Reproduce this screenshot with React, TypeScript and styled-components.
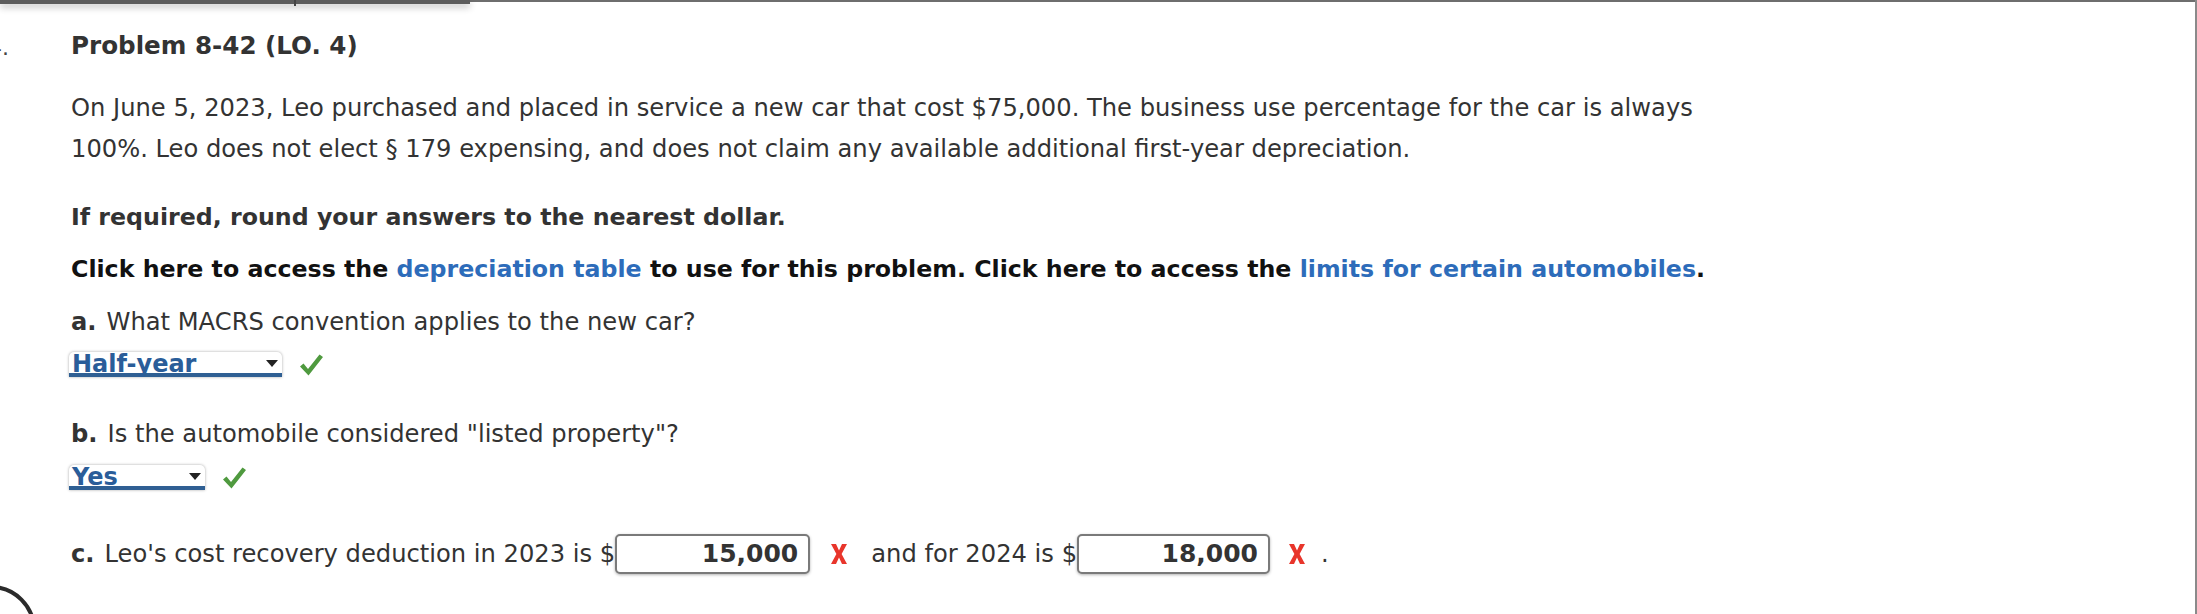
import React from "react";
import styled, { createGlobalStyle } from "styled-components";

const GlobalStyle = createGlobalStyle`
  html, body { margin: 0; padding: 0; background: #ffffff; }
  body { font-family: "DejaVu Sans", Verdana, sans-serif; color: #333333; }
`;

const Page = styled.div`
  position: relative;
  width: 2197px;
  height: 614px;
  box-sizing: border-box;
  border-right: 2px solid #8a8a8a;
  overflow: hidden;
  background: #ffffff;
`;

const TopBar = styled.div`
  display: flex;
  align-items: flex-start;
  height: 4px;
`;

const TopBarTab = styled.div`
  position: relative;
  width: 470px;
  height: 4px;
  background: #5c5c5c;
  box-shadow: 0 3px 7px rgba(0, 0, 0, 0.3);
  &::after {
    content: "";
    position: absolute;
    left: 294px;
    top: 0;
    width: 2px;
    height: 6px;
    background: #444;
  }
`;

const TopBarLine = styled.div`
  flex: 1;
  height: 2px;
  background: #6e6e6e;
`;

const Content = styled.div`
  display: grid;
  grid-template-columns: 71px 1fr;
  padding-top: 27px;
`;

const Gutter = styled.div`
  display: flex;
  justify-content: flex-start;
`;

const QNum = styled.div`
  width: 9px;
  overflow: hidden;
  display: flex;
  justify-content: flex-end;
  white-space: nowrap;
  font-size: 22px;
  line-height: 30px;
  margin-top: 2px;
  color: #444;
`;

const Main = styled.div`
  display: flex;
  flex-direction: column;
  min-width: 0;
`;

const Heading = styled.h2`
  margin: 0;
  font-size: 24.6px;
  line-height: 30px;
  font-weight: bold;
  color: #333333;
`;

const Para = styled.p<{ $gap: number }>`
  margin: ${(p) => p.$gap}px 0 0 0;
  font-size: 24.2px;
  line-height: 40.5px;
  color: #333333;
`;

const Line = styled.div<{ $gap: number; $dark?: boolean; $bold?: boolean }>`
  margin-top: ${(p) => p.$gap}px;
  font-size: ${(p) => (p.$bold ? "23.7px" : "24.2px")};
  line-height: 32px;
  font-weight: ${(p) => (p.$bold ? "bold" : "normal")};
  color: ${(p) => (p.$dark ? "#111111" : "#333333")};
  white-space: nowrap;
`;

const Link = styled.a`
  color: #2d6cba;
  font-weight: bold;
  text-decoration: none;
  cursor: pointer;
`;

const Label = styled.b`
  font-weight: bold;
  margin-right: 10px;
`;

const AnswerRow = styled.div<{ $gap: number }>`
  margin-top: ${(p) => p.$gap}px;
  display: flex;
  align-items: center;
  gap: 16px;
  margin-left: -2px;
`;

const SelectBox = styled.div<{ $width: number }>`
  position: relative;
  flex-shrink: 0;
  width: ${(p) => p.$width}px;
  height: 25px;
  box-sizing: border-box;
  background: #ffffff;
  border-radius: 5px 5px 0 0;
  box-shadow: 0 0 3px rgba(0, 0, 0, 0.35);
  border-bottom: 4px solid #2f5f93;
  display: flex;
  align-items: center;
  justify-content: space-between;
  padding: 0 4px 0 3px;
`;

const SelectValue = styled.span`
  font-size: 24px;
  font-weight: bold;
  line-height: 24px;
  color: #2a5d99;
  margin-top: 2px;
`;

const Caret = styled.span`
  width: 0;
  height: 0;
  border-left: 6px solid transparent;
  border-right: 6px solid transparent;
  border-top: 7px solid #222;
  margin-top: 2px;
`;

const FillRow = styled.div`
  margin-top: 44px;
  display: flex;
  align-items: center;
  font-size: 24.2px;
  line-height: 32px;
  color: #333333;
  white-space: nowrap;
`;

const NumberInput = styled.div<{ $width: number }>`
  flex-shrink: 0;
  width: ${(p) => p.$width}px;
  height: 40px;
  box-sizing: border-box;
  border: 2px solid #7a7a7a;
  border-radius: 5px;
  box-shadow: 0 1px 3px rgba(0, 0, 0, 0.3);
  background: #fff;
  display: flex;
  align-items: center;
  justify-content: flex-end;
  padding-right: 10px;
  font-size: 25px;
  font-weight: bold;
  color: #333;
`;

const Mark = styled.span<{ $ml: number; $mr: number }>`
  display: inline-flex;
  flex-shrink: 0;
  margin-left: ${(p) => p.$ml}px;
  margin-right: ${(p) => p.$mr}px;
`;

const Circle = styled.div`
  position: absolute;
  left: -54px;
  top: 585px;
  width: 90px;
  height: 90px;
  border-radius: 50%;
  border: 4px solid #2b2b2b;
  box-sizing: border-box;
`;

const Check = () => (
  <svg width="26" height="24" viewBox="0 0 26 24">
    <path
      d="M2 13.5 L5.5 10.5 L10 16 L21.5 1.5 L25 4 L10.5 22.5 Z"
      fill="#4f9a3f"
    />
  </svg>
);

const Cross = () => (
  <svg width="18" height="22" viewBox="0 0 18 22">
    <path
      d="M1 1 H6 L9 7.5 L12 1 H17 L11.6 11 L17 21 H12 L9 14.5 L6 21 H1 L6.4 11 Z"
      fill="#e8352b"
    />
  </svg>
);

export default function App() {
  return (
    <>
      <GlobalStyle />
      <Page>
        <TopBar>
          <TopBarTab />
          <TopBarLine />
        </TopBar>
        <Content>
          <Gutter>
            <QNum>4.</QNum>
          </Gutter>
          <Main>
            <Heading>Problem 8-42 (LO. 4)</Heading>
            <Para $gap={27}>
              On June 5, 2023, Leo purchased and placed in service a new car that cost $75,000. The business use percentage for the car is always
              <br />
              100%. Leo does not elect § 179 expensing, and does not claim any available additional first-year depreciation.
            </Para>
            <Line $gap={32} $bold>
              If required, round your answers to the nearest dollar.
            </Line>
            <Line $gap={20} $bold $dark>
              Click here to access the <Link>depreciation table</Link> to use for this problem. Click here to access the{" "}
              <Link>limits for certain automobiles</Link>.
            </Line>
            <Line $gap={21}>
              <Label>a.</Label>What MACRS convention applies to the new car?
            </Line>
            <AnswerRow $gap={14}>
              <SelectBox $width={213}>
                <SelectValue>Half-year</SelectValue>
                <Caret />
              </SelectBox>
              <Check />
            </AnswerRow>
            <Line $gap={41}>
              <Label>b.</Label>Is the automobile considered "listed property"?
            </Line>
            <AnswerRow $gap={15}>
              <SelectBox $width={136}>
                <SelectValue>Yes</SelectValue>
                <Caret />
              </SelectBox>
              <Check />
            </AnswerRow>
            <FillRow>
              <Label>c.</Label>Leo's cost recovery deduction in 2023 is $
              <NumberInput $width={195}>15,000</NumberInput>
              <Mark $ml={20} $mr={23}>
                <Cross />
              </Mark>
              and for 2024 is $
              <NumberInput $width={193}>18,000</NumberInput>
              <Mark $ml={18} $mr={15}>
                <Cross />
              </Mark>
              .
            </FillRow>
          </Main>
        </Content>
        <Circle />
      </Page>
    </>
  );
}
